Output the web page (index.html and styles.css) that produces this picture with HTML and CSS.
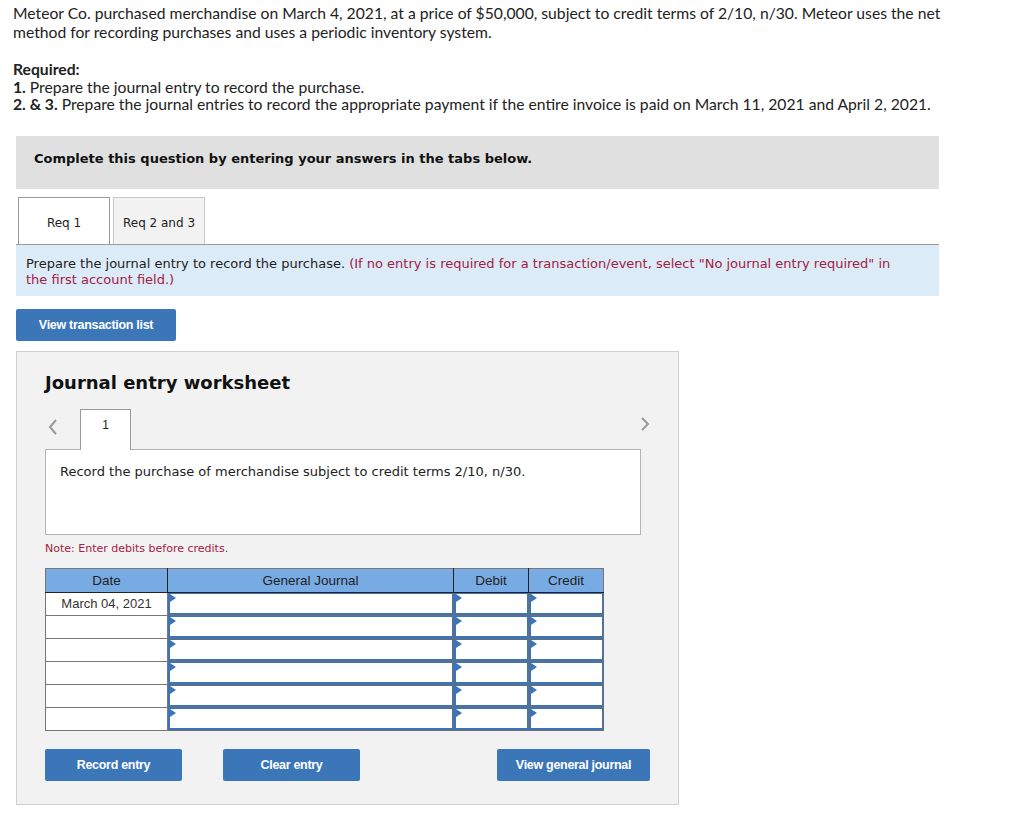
FILE: index.html
```html
<!DOCTYPE html>
<html>
  <head>
    <title>Journal Entry Question</title>
    <link rel="stylesheet" href="styles.css">
  </head>
  <body>
    <div class="question">
      <p class="intro">
        Meteor Co. purchased merchandise on March 4, 2021, at a price of $50,000, subject to credit terms of 2/10, n/30. Meteor uses the net
        method for recording purchases and uses a periodic inventory system.
      </p>
      <p class="required">
        <b>Required:</b><br>
        <b>1.</b> Prepare the journal entry to record the purchase.<br>
        <b>2. &amp; 3.</b> Prepare the journal entries to record the appropriate payment if the entire invoice is paid on March 11, 2021 and April 2, 2021.
      </p>
    </div>

    <div class="main">
      <div class="banner">Complete this question by entering your answers in the tabs below.</div>

      <div class="tabs">
        <div class="tab active">Req 1</div>
        <div class="tab">Req 2 and 3</div>
      </div>

      <p class="instruction">Prepare the journal entry to record the purchase. <span class="hint">(If no entry is required for a transaction/event, select "No journal entry required" in the first account field.)</span></p>

      <button class="btn btn-list">View transaction list</button>

      <div class="worksheet">
        <h2>Journal entry worksheet</h2>

        <div class="entry-nav">
          <svg class="chev" width="12" height="18" viewBox="0 0 12 18">
            <polyline points="9,2 3,9 9,16" fill="none" stroke="#9a9a9a" stroke-width="2"/>
          </svg>
          <div class="entry-tab">1</div>
          <svg class="chev chev-right" width="12" height="18" viewBox="0 0 12 18">
            <polyline points="3,3 9,9 3,15" fill="none" stroke="#9a9a9a" stroke-width="2"/>
          </svg>
        </div>

        <div class="entry-box">Record the purchase of merchandise subject to credit terms 2/10, n/30.</div>

        <p class="note">Note: Enter debits before credits.</p>

        <table class="journal">
          <thead>
            <tr>
              <th class="c-date">Date</th>
              <th class="c-acct">General Journal</th>
              <th class="c-num">Debit</th>
              <th class="c-num">Credit</th>
            </tr>
          </thead>
          <tbody>
            <tr>
              <td class="date">March 04, 2021</td>
              <td class="field"><div class="input"></div></td>
              <td class="field"><div class="input"></div></td>
              <td class="field"><div class="input"></div></td>
            </tr>
            <tr>
              <td class="date"></td>
              <td class="field"><div class="input"></div></td>
              <td class="field"><div class="input"></div></td>
              <td class="field"><div class="input"></div></td>
            </tr>
            <tr>
              <td class="date"></td>
              <td class="field"><div class="input"></div></td>
              <td class="field"><div class="input"></div></td>
              <td class="field"><div class="input"></div></td>
            </tr>
            <tr>
              <td class="date"></td>
              <td class="field"><div class="input"></div></td>
              <td class="field"><div class="input"></div></td>
              <td class="field"><div class="input"></div></td>
            </tr>
            <tr>
              <td class="date"></td>
              <td class="field"><div class="input"></div></td>
              <td class="field"><div class="input"></div></td>
              <td class="field"><div class="input"></div></td>
            </tr>
            <tr>
              <td class="date"></td>
              <td class="field"><div class="input"></div></td>
              <td class="field"><div class="input"></div></td>
              <td class="field"><div class="input"></div></td>
            </tr>
          </tbody>
        </table>

        <div class="actions">
          <button class="btn btn-record">Record entry</button>
          <button class="btn btn-clear">Clear entry</button>
          <button class="btn btn-journal">View general journal</button>
        </div>
      </div>
    </div>
  </body>
</html>
```

FILE: styles.css
```css
body {
  margin: 0;
  background: #fff;
  color: #222;
}

.question {
  font-family: Lato, "Open Sans", sans-serif;
  font-size: 15.7px;
  padding: 4px 0 0 13px;
  width: 940px;
}

.question b {
  font-weight: 700;
}

.intro {
  margin: 0;
  line-height: 19px;
}

.required {
  margin: 19px 0 0;
  line-height: 17.5px;
}

.main {
  margin: 22px 0 0 16px;
  width: 923px;
  font-family: "DejaVu Sans", Verdana, sans-serif;
}

.banner {
  background: #e0e0e0;
  height: 53px;
  padding: 0 0 8px 18px;
  font-size: 13px;
  font-weight: bold;
  color: #111;
  box-sizing: border-box;
  display: flex;
  align-items: center;
}

.tabs {
  display: flex;
  gap: 3px;
  margin-top: 8px;
  padding-left: 2px;
  border-bottom: 1px solid #9a9a9a;
}

.tab {
  width: 92px;
  height: 47px;
  box-sizing: border-box;
  border: 1px solid #c8c8c8;
  border-bottom: none;
  background: #f2f2f2;
  font-size: 12px;
  color: #222;
  display: flex;
  align-items: center;
  justify-content: center;
  padding-top: 4px;
}

.tab.active {
  background: #fff;
  border-color: #9a9a9a;
}

.instruction {
  margin: 0;
  background: #dbebf8;
  font-size: 13px;
  line-height: 16px;
  padding: 11px 34px 10px 10px;
  height: 51px;
  box-sizing: border-box;
  color: #222;
}

.hint {
  color: #a5203e;
}

.btn {
  background: #3a76b8;
  color: #fff;
  border: none;
  border-radius: 2px;
  font-family: "Liberation Sans", Arial, sans-serif;
  font-weight: bold;
  font-size: 12.5px;
  letter-spacing: -0.3px;
  height: 32px;
  padding: 0;
  cursor: pointer;
}

.btn-list {
  display: block;
  width: 160px;
  margin-top: 13px;
}

.worksheet {
  margin-top: 10px;
  width: 663px;
  height: 454px;
  box-sizing: border-box;
  background: #f2f2f2;
  border: 1px solid #cfcfcf;
  padding: 19px 0 0 28px;
}

.worksheet h2 {
  margin: 0;
  font-size: 18px;
  line-height: 24px;
  font-weight: bold;
  color: #111;
}

.entry-nav {
  display: flex;
  align-items: center;
  margin-top: 14px;
  width: 606px;
  height: 41px;
}

.chev {
  margin-left: 2px;
  margin-top: -4px;
}

.entry-tab {
  width: 51px;
  height: 41px;
  box-sizing: border-box;
  margin-left: 21px;
  background: #fff;
  border: 1px solid #9a9a9a;
  border-bottom: none;
  font-family: "Liberation Sans", Arial, sans-serif;
  font-size: 12px;
  text-align: center;
  padding-top: 8px;
  color: #222;
  position: relative;
  z-index: 1;
}

.chev-right {
  margin-left: auto;
  margin-top: -10px;
}

.entry-box {
  width: 596px;
  height: 86px;
  box-sizing: border-box;
  margin-top: -1px;
  background: #fff;
  border: 1px solid #b4b4b4;
  padding: 14px 0 0 14px;
  font-size: 13px;
  color: #222;
}

.note {
  margin: 7px 0 0;
  font-size: 11px;
  color: #a5203e;
}

.journal {
  margin-top: 13px;
  border-collapse: collapse;
  font-family: "Liberation Sans", Arial, sans-serif;
  border: 1px solid #777;
}

.journal th {
  background: #78abe3;
  font-size: 13.5px;
  font-weight: normal;
  color: #222;
  height: 23px;
  padding: 0;
  border-left: 1px solid #222;
  border-bottom: 1px solid #222;
}

.journal th.c-date {
  border-left: none;
}

.c-date {
  width: 121px;
}

.c-acct {
  width: 285px;
}

.c-num {
  width: 74px;
}

.journal td {
  height: 22px;
  padding: 0;
  border: 1px solid #777;
  background: #fff;
  vertical-align: top;
}

.journal td.date {
  font-size: 13px;
  color: #333;
  text-align: center;
  vertical-align: middle;
}

.journal td.field {
  border: 1px solid #6e6e6e;
}

.input {
  border: 1px solid #3b74b8;
  border-width: 1px 1px 2px 2px;
  box-sizing: border-box;
  height: 22px;
  position: relative;
}

.input::before {
  content: "";
  position: absolute;
  left: 0;
  top: 0;
  border-left: 6px solid #3b74b8;
  border-top: 4px solid transparent;
  border-bottom: 4px solid transparent;
}

.actions {
  display: flex;
  margin-top: 18px;
}

.btn-record {
  width: 137px;
}

.btn-clear {
  width: 137px;
  margin-left: 41px;
}

.btn-journal {
  width: 153px;
  margin-left: 137px;
}
```
